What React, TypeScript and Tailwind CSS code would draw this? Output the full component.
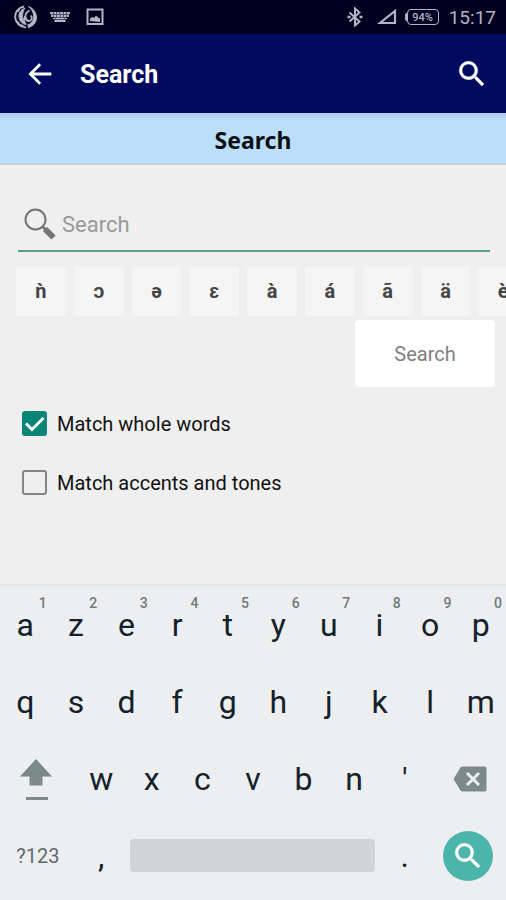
import React, { useState } from 'react';

interface LetterKey {
  label: string;
  hint?: string;
}

const SPECIAL_CHARS = ['ǹ', 'ɔ', 'ə', 'ɛ', 'à', 'á', 'ã', 'ä', 'è'];

const TOP_ROW: LetterKey[] = [
  { label: 'a', hint: '1' },
  { label: 'z', hint: '2' },
  { label: 'e', hint: '3' },
  { label: 'r', hint: '4' },
  { label: 't', hint: '5' },
  { label: 'y', hint: '6' },
  { label: 'u', hint: '7' },
  { label: 'i', hint: '8' },
  { label: 'o', hint: '9' },
  { label: 'p', hint: '0' },
];

const HOME_ROW: LetterKey[] = ['q', 's', 'd', 'f', 'g', 'h', 'j', 'k', 'l', 'm'].map((label) => ({ label }));
const BOTTOM_ROW: LetterKey[] = ['w', 'x', 'c', 'v', 'b', 'n', "'"].map((label) => ({ label }));

const SearchGlyph: React.FC<{ className?: string }> = ({ className }) => (
  <svg viewBox="0 0 24 24" fill="currentColor" className={className} aria-hidden="true">
    <path
      d="M15.5 14h-.79l-.28-.27A6.471 6.471 0 0 0 16 9.5 6.5 6.5 0 1 0 9.5 16c1.61 0 3.09-.59 4.23-1.57l.27.28v.79l5 4.99L20.49 19l-4.99-5zm-6 0C7.01 14 5 11.99 5 9.5S7.01 5 9.5 5 14 7.01 14 9.5 11.99 14 9.5 14z"
      stroke="currentColor"
      strokeWidth="0.3"
    />
  </svg>
);

const StatusBar: React.FC = () => (
  <div className="flex h-[34px] items-center justify-between bg-[#000020] pl-3.5 pr-2.5 text-[#b4b4c6]">
    <div className="flex items-center gap-3">
      <svg viewBox="0 0 24 24" className="size-6" fill="none" stroke="currentColor" aria-hidden="true">
        <path d="M10 1.5C4 3 .8 7.5 1.2 12.5c.4 5 4.5 9.5 11 10" strokeWidth="2" />
        <path d="M14 22.5c5-1 8.500-5 8.500-10C22.500 7.500 19 3 14.500 1.500c3.500 3 5.500 6.500 5 11-.4 4-2.500 6.500-6 7.500" fill="currentColor" />
        <path d="M11 3C6.500 5 4.500 8 5 12c.3 3.500 2.500 6.500 7 7.500-3-3-4-5.500-3.500-9C8.800 7.500 9.500 5 11 3z" fill="currentColor" />
        <path d="M15.500 5.500c-3 1.500-4.500 4-4 7 .3 2 1.500 3.500 3.500 3.500 2.500 0 3.500-3 2-5.500M12 19.500c-2-2-2.500-5-1-8" strokeWidth="1.8" />
        <path d="M3.500 7l2-3M2.500 16l3 2.500M5.500 20l4 .5" strokeWidth="1.5" />
      </svg>
      <svg viewBox="0 0 20 12" className="h-3 w-5" fill="currentColor" aria-hidden="true">
        <path d="M0 1h3v2H0zM4 1h2v2H4zM7 1h2v2H7zM10 1h3v2h-3zM14 1h2v2h-2zM17 1h3v2h-3zM1 4h2v2H1zM4 4h2v2H4zM7 4h3v2H7zM11 4h2v2h-2zM14 4h2v2h-2zM17 4h2v2h-2zM3 7h2v1H3zM6 7h8v1H6zM15 7h2v1h-2zM5 9h10v2H5z" />
        <path d="M1 1h18v5H1zM4 6h12v5H4z" opacity=".45" />
      </svg>
      <svg viewBox="0 0 18 18" className="ml-1 size-[18px]" fill="none" stroke="currentColor" strokeWidth="2" aria-hidden="true">
        <path d="M1.500 1.500h15v14.500h-15z" />
        <path d="M4 13v-2.500l2.500-1.500 1.500 1 2-2.500 2 2 2 1v3.500z" fill="currentColor" stroke="none" />
      </svg>
    </div>
    <div className="flex items-center">
      <svg viewBox="0 0 16 20" className="h-5 w-4" fill="none" stroke="currentColor" strokeWidth="2" aria-hidden="true">
        <path d="M2.500 5.500l10 9-4.500 4V1.500l4.500 4-10 9" />
        <path d="M0.500 10h3M12.500 10h3" strokeWidth="2.400" />
      </svg>
      <svg viewBox="0 0 20 16" className="ml-3.5 h-4 w-5" fill="none" stroke="currentColor" strokeWidth="2.200" aria-hidden="true">
        <path d="M18 2v12H3z" />
      </svg>
      <div className="ml-2 flex items-center">
        <span className="h-2 w-0.5 rounded-l-sm bg-[#b4b4c6]" />
        <span className="flex h-4 w-8 items-center justify-center rounded-sm border border-[#b4b4c6] text-[11px] font-medium leading-none">
          94%
        </span>
      </div>
      <span className="ml-2.5 text-[19px] leading-none">15:17</span>
    </div>
  </div>
);

const AppBar: React.FC = () => (
  <header className="flex h-[79px] items-center bg-[#000b60] pl-6 pr-[17px] text-white">
    <button type="button" aria-label="Back" className="size-8">
      <svg viewBox="0 0 24 24" fill="currentColor" className="size-8" aria-hidden="true">
        <path d="M20.500 10.800H7.400l5.400-5.300L11.400 4 3.300 12l8.100 8 1.400-1.500-5.400-5.300h13.100z" />
      </svg>
    </button>
    <h1 className="ml-6 flex-1 pt-0.5 text-[25px] font-bold leading-8">Search</h1>
    <button type="button" aria-label="Search" className="size-[34px]">
      <SearchGlyph className="size-[34px]" />
    </button>
  </header>
);

interface OptionProps {
  id: string;
  label: string;
  checked: boolean;
  onChange: (checked: boolean) => void;
}

const Option: React.FC<OptionProps> = ({ id, label, checked, onChange }) => (
  <div className="flex h-[59px] items-center gap-2.5">
    <span className="relative size-[25px]">
      <input
        id={id}
        type="checkbox"
        checked={checked}
        onChange={(e) => onChange(e.target.checked)}
        className="peer block size-[25px] appearance-none rounded-[3px] border-2 border-[#858585] checked:border-[#0a8577] checked:bg-[#0a8577]"
      />
      <svg
        viewBox="0 0 25 25"
        fill="none"
        stroke="white"
        strokeWidth="2.8"
        className="pointer-events-none absolute inset-0 hidden size-[25px] peer-checked:block"
        aria-hidden="true"
      >
        <path d="M4 12.500l6 6L21.500 7" />
      </svg>
    </span>
    <label htmlFor={id} className="text-[20px] leading-6 text-[#111]">
      {label}
    </label>
  </div>
);

const Key: React.FC<{ item: LetterKey; onPress: (char: string) => void }> = ({ item, onPress }) => (
  <button
    type="button"
    onClick={() => onPress(item.label)}
    className="relative col-span-2 flex h-[77px] items-center justify-center text-[32px] leading-none text-[#13212a]"
  >
    {item.label}
    {item.hint && (
      <span className="absolute right-1 top-2.5 text-[14px] font-medium leading-none text-[#707a7e]">{item.hint}</span>
    )}
  </button>
);

const Keyboard: React.FC<{ onPress: (char: string) => void; onDelete: () => void }> = ({ onPress, onDelete }) => (
  <div className="grid grid-cols-20 items-center border-t-2 border-[#e6e7e8] bg-[#eceef0] pb-1.5">
    {TOP_ROW.map((item) => (
      <Key key={item.label} item={item} onPress={onPress} />
    ))}
    {HOME_ROW.map((item) => (
      <Key key={item.label} item={item} onPress={onPress} />
    ))}

    <button type="button" aria-label="Shift" className="col-span-3 flex h-[77px] items-center justify-center pr-1">
      <svg viewBox="0 0 32 46" className="h-[46px] w-8" fill="#7c898d" aria-hidden="true">
        <path d="M16 3L32 20.500H22.500V29.500H9.500V20.500H0z" />
        <path d="M6 41h22v3H6z" />
      </svg>
    </button>
    {BOTTOM_ROW.map((item) => (
      <Key key={item.label} item={item} onPress={onPress} />
    ))}
    <button
      type="button"
      aria-label="Delete"
      onClick={onDelete}
      className="col-span-3 flex h-[77px] items-center justify-center pl-1"
    >
      <svg viewBox="0 0 34 26" className="h-[26px] w-[34px]" aria-hidden="true">
        <path d="M9 0.500h22.500a2 2 0 0 1 2 2v21a2 2 0 0 1-2 2H9L7.500 24.500 0.500 13 7.500 1.500z" fill="#7c898d" />
        <path d="M14 7l12 12M26 7L14 19" fill="none" stroke="#eceef0" strokeWidth="3" />
      </svg>
    </button>

    <button type="button" className="col-span-3 h-[77px] text-[20px] leading-none text-[#5f6a6f]">
      ?123
    </button>
    <Key item={{ label: ',' }} onPress={onPress} />
    <div className="col-span-10 px-1">
      <button
        type="button"
        aria-label="Space"
        onClick={() => onPress(' ')}
        className="block h-[33px] w-full rounded bg-[#cfd4d7]"
      />
    </div>
    <Key item={{ label: '.' }} onPress={onPress} />
    <div className="col-span-3 flex justify-center">
      <button
        type="button"
        aria-label="Run search"
        className="flex size-[50px] items-center justify-center rounded-full bg-[#4cb5ab] text-white"
      >
        <SearchGlyph className="size-[34px]" />
      </button>
    </div>
  </div>
);

export default function App() {
  const [query, setQuery] = useState('');
  const [wholeWords, setWholeWords] = useState(true);
  const [accents, setAccents] = useState(false);

  const append = (char: string) => setQuery((q) => q + char);

  return (
    <div className="flex min-h-screen flex-col bg-[#efefef] font-[Roboto,sans-serif]">
      <StatusBar />
      <AppBar />
      <h2 className="h-[52px] border-b-2 border-[#cccfd3] bg-[#bbdefb] bg-linear-to-b from-[#afc9e8] to-[#bbdefb] to-15% text-center font-['Noto_Sans',sans-serif] text-[23px] font-bold leading-[54px] text-[#0a0f14]">
        Search
      </h2>

      <main className="flex-1 pt-[33px]">
        <div className="ml-[18px] mr-4 flex h-[54px] items-center border-b-2 border-[#5aa088] pl-1.5">
          <svg viewBox="0 0 32 32" className="size-8 shrink-0" fill="none" stroke="#757575" aria-hidden="true">
            <circle cx="11.5" cy="11.5" r="10" strokeWidth="2" />
            <path d="M18.500 18.500l4 4" strokeWidth="2.500" />
            <path d="M21 21l8.500 8.500" strokeWidth="6" />
          </svg>
          <input
            type="text"
            aria-label="Search"
            placeholder="Search"
            value={query}
            onChange={(e) => setQuery(e.target.value)}
            className="ml-1.5 min-w-0 flex-1 bg-transparent pt-0.5 text-[22px] leading-8 text-[#222] outline-none placeholder:text-[#999]"
          />
        </div>

        <div className="mt-3.5 flex overflow-hidden pl-3">
          {SPECIAL_CHARS.map((char) => (
            <div key={char} className="w-[11.7%] shrink-0 px-1">
              <button
                type="button"
                onClick={() => append(char)}
                className="h-[50px] w-full rounded-sm bg-[#f5f5f5] text-[20px] font-bold leading-none text-[#444]"
              >
                {char}
              </button>
            </div>
          ))}
        </div>

        <div className="mt-1 flex justify-end pr-[11px]">
          <button type="button" className="h-[67px] w-[140px] rounded-sm bg-white text-[20px] leading-none text-[#808080]">
            Search
          </button>
        </div>

        <div className="mt-[7px] pl-[22px]">
          <Option id="whole-words" label="Match whole words" checked={wholeWords} onChange={setWholeWords} />
          <Option id="accents" label="Match accents and tones" checked={accents} onChange={setAccents} />
        </div>
      </main>

      <Keyboard onPress={append} onDelete={() => setQuery((q) => q.slice(0, -1))} />
    </div>
  );
}
